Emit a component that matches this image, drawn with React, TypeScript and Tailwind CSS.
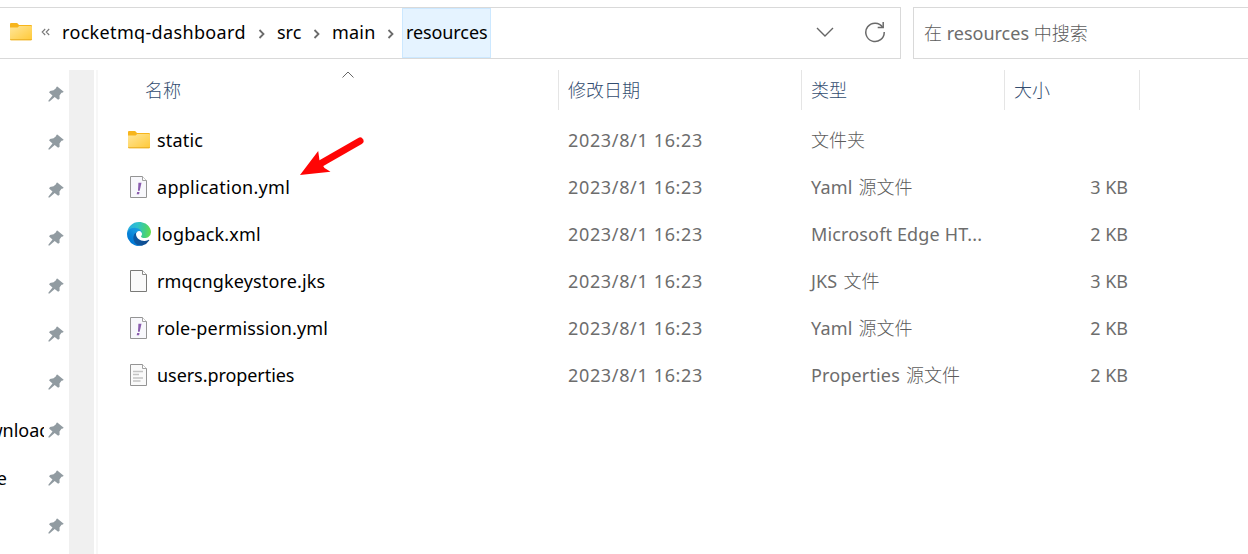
import React from 'react'

type FileKind = 'folder' | 'yaml' | 'edge' | 'blank' | 'text'

interface FileRow {
  name: string
  kind: FileKind
  app: string
  type: string
  size: string
  tracking: string
}

const files: FileRow[] = [
  { name: 'static', kind: 'folder', app: '', type: '文件夹', size: '', tracking: 'tracking-[0.2px]' },
  { name: 'application.yml', kind: 'yaml', app: 'Yaml', type: '源文件', size: '3 KB', tracking: 'tracking-[0.28px]' },
  { name: 'logback.xml', kind: 'edge', app: 'Microsoft Edge HT...', type: '', size: '2 KB', tracking: 'tracking-[0.18px]' },
  { name: 'rmqcngkeystore.jks', kind: 'blank', app: 'JKS', type: '文件', size: '3 KB', tracking: 'tracking-[0.14px]' },
  { name: 'role-permission.yml', kind: 'yaml', app: 'Yaml', type: '源文件', size: '2 KB', tracking: 'tracking-[0.16px]' },
  { name: 'users.properties', kind: 'text', app: 'Properties', type: '源文件', size: '2 KB', tracking: 'tracking-[-0.06px]' },
]

const pinned = ['', '', '', '', '', '', '', 'Downloads', 'e', '']

const FolderIcon: React.FC = () => (
  <svg width="24" height="20" viewBox="0 0 24 20" className="shrink-0">
    <defs>
      <linearGradient id="folder" x1="0" y1="0" x2="1" y2="1">
        <stop offset="0" stopColor="#ffe69a" />
        <stop offset="1" stopColor="#ffc937" />
      </linearGradient>
    </defs>
    <path d="M1 2a1 1 0 0 1 1-1h5.600a1.200 1.200 0 0 1 .8.3L10 3h12a1 1 0 0 1 1 1V8H1z" fill="#f7b51c" />
    <path d="M1 5.600h7.600l1.600-1.600H22a1 1 0 0 1 1 1v12.200a1 1 0 0 1-1 1H2a1 1 0 0 1-1-1z" fill="url(#folder)" />
    <path d="M1 17.200h22a1 1 0 0 1-1 1H2a1 1 0 0 1-1-1z" fill="#e9ac22" />
  </svg>
)

const EdgeIcon: React.FC = () => (
  <svg width="24" height="24" viewBox="0 0 256 256" className="shrink-0">
    <defs>
      <linearGradient id="edgeA" x1="63" y1="177" x2="241" y2="177" gradientUnits="userSpaceOnUse">
        <stop offset="0" stopColor="#0c59a4" />
        <stop offset="1" stopColor="#114a8b" />
      </linearGradient>
      <linearGradient id="edgeB" x1="157" y1="101" x2="46" y2="222" gradientUnits="userSpaceOnUse">
        <stop offset="0" stopColor="#1b9de2" />
        <stop offset=".3" stopColor="#1595df" />
        <stop offset=".7" stopColor="#0680d7" />
        <stop offset="1" stopColor="#0078d4" />
      </linearGradient>
      <linearGradient id="edgeC" x1="10" y1="60" x2="256" y2="90" gradientUnits="userSpaceOnUse">
        <stop offset="0" stopColor="#2aaee0" />
        <stop offset=".4" stopColor="#2fc2cc" />
        <stop offset=".75" stopColor="#45d080" />
        <stop offset="1" stopColor="#66dd4e" />
      </linearGradient>
    </defs>
    <path fill="url(#edgeA)" d="M231 190.500c-3.400 1.800-6.900 3.400-10.500 4.700a101.700 101.700 0 0 1-35.900 6.500c-47.300 0-88.500-32.500-88.500-74.300a31.500 31.500 0 0 1 16.400-27.300c-42.800 1.800-53.800 46.400-53.800 72.500 0 74 68.100 81.400 82.800 81.400 7.900 0 19.800-2.300 27-4.600l1.300-.4a128.300 128.300 0 0 0 66.600-52.800 4 4 0 0 0-5.400-5.700z" />
    <path fill="url(#edgeB)" d="M105.700 241.400a79.200 79.200 0 0 1-22.700-21.300 80.700 80.700 0 0 1 29.500-120c3.200-1.500 8.500-4.100 15.600-4a32.400 32.400 0 0 1 25.700 13 31.900 31.900 0 0 1 6.300 18.700c0-.2 24.500-79.600-80-79.600-43.900 0-80 41.700-80 78.200a130.200 130.200 0 0 0 12.100 56 128 128 0 0 0 156.400 67 75.500 75.500 0 0 1-62.800-8z" />
    <path fill="url(#edgeC)" d="M152.300 148.900c-.8 1-3.300 2.500-3.300 5.700 0 2.600 1.700 5.100 4.700 7.200 14.400 10 41.500 8.700 41.600 8.700a59.600 59.600 0 0 0 30.300-8.300 61.400 61.400 0 0 0 30.400-52.900c.3-22.400-8-37.300-11.300-43.900C223.500 23.900 177.700 0 128 0A128 128 0 0 0 0 126.200c.5-36.500 36.800-66 80-66 3.500 0 23.500.3 42 10a72.600 72.600 0 0 1 30.900 29.300c6.100 10.600 7.200 24.100 7.200 29.500 0 5.400-2.700 13.300-7.800 19.900z" />
  </svg>
)

const PageIcon: React.FC<{ kind: FileKind }> = ({ kind }) => (
  <svg width="24" height="24" viewBox="0 0 24 24" className="shrink-0">
    <path
      d="M3.500 1.500h12l4 4v17h-16z"
      fill={kind === 'yaml' ? '#f8f8fc' : '#fafafa'}
      stroke={kind === 'blank' ? '#7a7a78' : '#949494'}
    />
    <path d="M15.500 1.500v4h4" fill="#fff" stroke={kind === 'blank' ? '#8a8a88' : '#a2a2a2'} />
    {kind === 'yaml' && (
      <>
        <path d="M11.400 7.800h3.100l-1.800 8h-1.700z" fill="#8a5cae" />
        <path d="M10.100 17h2.400l-.4 2.200H9.700z" fill="#8a5cae" />
      </>
    )}
    {kind === 'text' && (
      <path d="M6 8.500h10M6 11.500h6M6 15h10M6 18h7.500" stroke="#c3c3c3" strokeWidth="1.300" />
    )}
  </svg>
)

const FileIcon: React.FC<{ kind: FileKind }> = ({ kind }) => {
  if (kind === 'folder') return <FolderIcon />
  if (kind === 'edge') return <EdgeIcon />
  return <PageIcon kind={kind} />
}

const PinIcon: React.FC = () => (
  <svg width="16" height="16" viewBox="0 0 16 16" className="shrink-0">
    <path
      d="M9.300.4 15.700 5.700 14.900 6.600 13.500 6.800 11.500 9.400 11.600 12.700 10.100 13.800 6.700 11 1.500 15.500.4 15.600.5 14.400 4.500 9.400 1.100 6.500 2 5 5.600 4.200 8.200 2 8.300.9z"
      fill="#919ba1"
    />
  </svg>
)

const Crumb: React.FC = () => (
  <svg width="8" height="10" viewBox="0 0 8 10" className="shrink-0">
    <path d="M1.500 1 5.500 5l-4 4" fill="none" stroke="#6b6b6b" strokeWidth="1.800" />
  </svg>
)

const AddressBar: React.FC = () => (
  <div className="flex h-[52px] w-[901px] shrink-0 items-center border-y border-r border-[#d9d9d9] text-black">
    <div className="flex w-[62px] shrink-0 items-center pb-0.5 pl-[9px]">
      <FolderIcon />
      <svg width="10" height="8" viewBox="0 0 10 8" className="ml-2">
        <path d="M4.200 1 1.200 4l3 3M8.200 1l-3 3 3 3" fill="none" stroke="#777" strokeWidth="1.100" />
      </svg>
    </div>
    <span className="w-[196px] shrink-0 pb-0.5 tracking-[0.34px]">rocketmq-dashboard</span>
    <div className="flex w-[19px] shrink-0 pt-0.5"><Crumb /></div>
    <span className="w-9 shrink-0 pb-0.5">src</span>
    <div className="flex w-[19px] shrink-0 pt-0.5"><Crumb /></div>
    <span className="w-[55px] shrink-0 pb-0.5 tracking-[0.2px]">main</span>
    <div className="flex w-[15px] shrink-0 pt-0.5"><Crumb /></div>
    <span className="flex h-[50px] w-[89px] shrink-0 items-center border border-[#cce8ff] bg-[#e5f3ff] pb-0.5 pl-[3px] tracking-[-0.1px]">
      resources
    </span>
    <div className="ml-auto flex items-center gap-[30px] pr-3.5">
      <svg width="18" height="10" viewBox="0 0 18 10" className="-mt-0.5">
        <path d="m1 1 8 8 8-8" fill="none" stroke="#666" strokeWidth="1.400" />
      </svg>
      <svg width="22" height="22" viewBox="0 0 22 22" className="-mt-0.5">
        <path d="M18.700 6.300A9.200 9.200 0 1 0 20.200 11" fill="none" stroke="#6a6a6a" strokeWidth="1.500" />
        <path d="M19.200 1v5.500h-5.500" fill="none" stroke="#6a6a6a" strokeWidth="1.500" />
      </svg>
    </div>
  </div>
)

const Sidebar: React.FC = () => (
  <div className="flex w-[69px] shrink-0 flex-col">
    {pinned.map((label, i) => (
      <div key={i} className="flex h-12 shrink-0 items-center">
        <div className="flex w-11 shrink-0 justify-end overflow-hidden">
          {label === 'Downloads' && <span className="-mr-[15px] whitespace-nowrap text-black">{label}</span>}
          {label === 'e' && <span className="mr-[37px] text-black">{label}</span>}
        </div>
        <div className="ml-1">
          <PinIcon />
        </div>
      </div>
    ))}
  </div>
)

const App: React.FC = () => {
  return (
    <div className="relative flex h-[554px] w-[1248px] flex-col overflow-hidden bg-white font-['Noto_Sans','Noto_Sans_CJK_SC',sans-serif] text-[18px] leading-6 text-[#6d6d6d]">
      <div className="flex gap-3 pt-[7px]">
        <AddressBar />
        <div className="flex h-[52px] flex-1 items-center border-y border-l border-[#d9d9d9] pl-2.5">
          <span className="whitespace-pre font-light text-[#5c5c5c]">在 </span>
          <span>resources</span>
          <span className="whitespace-pre font-light text-[#5c5c5c]"> 中搜索</span>
        </div>
      </div>

      <div className="mt-[11px] flex flex-1">
        <Sidebar />
        <div className="w-[25px] shrink-0 bg-[#f0f0f0]" />
        <div className="ml-0.5 w-0.5 shrink-0 bg-[#f7f7f7]" />

        <div className="flex flex-1 flex-col">
          {/* Column titles */}
          <div className="flex h-10 pt-px font-light text-[#334d70]">
            <div className="relative -mt-px flex w-[461px] items-center border-r border-[#e5e5e5] pl-[47px]">
              名称
              <svg width="12" height="7" viewBox="0 0 12 7" className="absolute top-px left-[244px]">
                <path d="m.5 6.500 5.500-5.500 5.500 5.500" fill="none" stroke="#666" />
              </svg>
            </div>
            <div className="-mt-px flex w-[243px] items-center border-r border-[#e5e5e5] pl-[9px]">修改日期</div>
            <div className="-mt-px flex w-[203px] items-center border-r border-[#e5e5e5] pl-[9px]">类型</div>
            <div className="-mt-px flex w-[135px] items-center border-r border-[#e5e5e5] pl-[9px]">大小</div>
          </div>

          {/* Files */}
          <div className="mt-1.5 flex flex-col">
            {files.map((file) => (
              <div key={file.name} className="flex h-[47px] items-center whitespace-nowrap">
                <div className="flex w-[470px] items-center gap-1.5 pl-[29px] text-black">
                  <FileIcon kind={file.kind} />
                  <span className={file.tracking}>{file.name}</span>
                </div>
                <div className="w-[243px] tracking-[0.65px]">2023/8/1 16:23</div>
                <div className="flex w-[203px] gap-1.5">
                  {file.app && <span className="tracking-[0.15px]">{file.app}</span>}
                  {file.type && <span className="font-light text-[#5c5c5c]">{file.type}</span>}
                </div>
                <div className="w-[114px] text-right">{file.size}</div>
              </div>
            ))}
          </div>
        </div>
      </div>

      {/* Red pointer next to application.yml */}
      <svg width="66" height="42" viewBox="0 0 66 42" className="absolute top-[136px] left-[299px]">
        <path d="M61 5 20 28.500" stroke="#ff0505" strokeWidth="7" strokeLinecap="round" />
        <path d="M1 39 19.200 15l1.300 9.500 5 7.500 6 3.800z" fill="#ff0505" />
      </svg>
    </div>
  )
}

export default App
